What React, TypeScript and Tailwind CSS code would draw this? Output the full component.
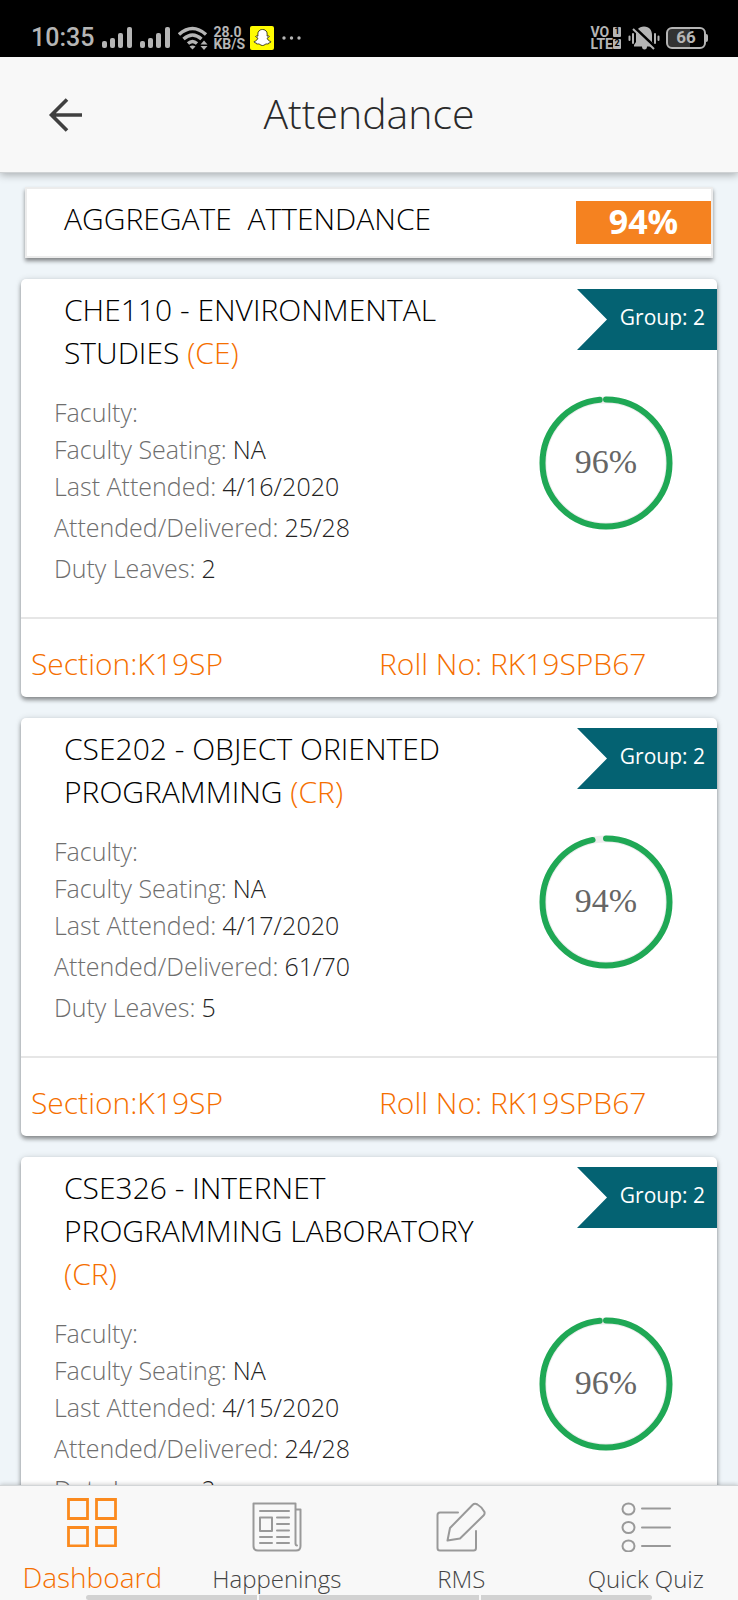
import type { ReactNode } from "react";
import { FaSnapchatGhost } from "react-icons/fa";

type Course = {
  code: string;
  name: string;
  kind: string;
  group: number;
  lastAttended: string;
  attended: string;
  dutyLeaves: number;
  percent: number;
  arc: number;
};

const courses: Course[] = [
  { code: "CHE110", name: "ENVIRONMENTAL STUDIES", kind: "CE", group: 2, lastAttended: "4/16/2020", attended: "25/28", dutyLeaves: 2, percent: 96, arc: 98.4 },
  { code: "CSE202", name: "OBJECT ORIENTED PROGRAMMING", kind: "CR", group: 2, lastAttended: "4/17/2020", attended: "61/70", dutyLeaves: 5, percent: 94, arc: 96.6 },
  { code: "CSE326", name: "INTERNET PROGRAMMING LABORATORY", kind: "CR", group: 2, lastAttended: "4/15/2020", attended: "24/28", dutyLeaves: 2, percent: 96, arc: 98.4 },
];

function SignalBars() {
  return (
    <svg viewBox="0 0 30 21" className="h-[21px] w-[30px]" fill="#b5b5b5" aria-hidden="true">
      <rect x="0" y="14" width="5" height="7" rx="2" />
      <rect x="8" y="11" width="5" height="10" rx="2" />
      <rect x="16" y="6" width="5" height="15" rx="2" />
      <rect x="25" y="0" width="5" height="21" rx="2" />
    </svg>
  );
}

function StatusBar() {
  return (
    <div className="flex h-[57px] shrink-0 items-center justify-between bg-black pt-[18px] pr-[30px] pl-[31px] font-[Roboto,sans-serif] text-[#b5b5b5]">
      <div className="flex items-center">
        <span className="text-[25px] leading-8 font-medium">10:35</span>
        <div className="ml-2 flex gap-2">
          <SignalBars />
          <SignalBars />
        </div>
        <svg viewBox="0 0 30 24" className="ml-2 h-6 w-[30px]" fill="none" stroke="#b5b5b5" strokeWidth="3.400" aria-hidden="true">
          <path d="M1 8.500Q14.500-3.500 28 8.500" />
          <path d="M5.500 13Q14.500 5 23.500 13" />
          <path d="M10 17.500Q14.500 13.500 19 17.500" />
          <path d="M11.500 20.500Q14.500 18.500 17.500 20.500L14.500 23.500Z" fill="#b5b5b5" stroke="none" />
          <path d="M22.500 18.500L26 14.500L29.500 18.500ZM22.500 20L26 24L29.500 20Z" fill="#b5b5b5" stroke="none" />
        </svg>
        <div className="ml-[5px] flex flex-col text-[14px] leading-3 font-bold">
          <span>28.0</span>
          <span>KB/S</span>
        </div>
        <span className="ml-[5px] flex size-6 items-center justify-center rounded-[2px] bg-[#fffc00]">
          <FaSnapchatGhost className="size-[17px] overflow-visible fill-white stroke-black" strokeWidth={22} aria-hidden="true" />
        </span>
        <svg viewBox="0 0 20 4" className="ml-2 h-1 w-5" fill="#b5b5b5" aria-hidden="true">
          <circle cx="2" cy="2" r="1.700" />
          <circle cx="9.500" cy="2" r="1.700" />
          <circle cx="17" cy="2" r="1.700" />
        </svg>
      </div>
      <div className="flex items-center">
        <div className="flex flex-col text-[14px] leading-3 font-bold">
          <span className="flex items-center justify-between gap-[2px]">
            VO
            <span className="flex h-[10px] w-2 items-center justify-center rounded-[1px] bg-[#b5b5b5] text-[9px] leading-none text-black">1</span>
          </span>
          <span className="flex items-center justify-between">
            LTE
            <span className="flex h-[10px] w-2 items-center justify-center rounded-[1px] bg-[#b5b5b5] text-[9px] leading-none text-black">2</span>
          </span>
        </div>
        <svg viewBox="0 0 32 24" className="ml-[7px] h-6 w-8" aria-hidden="true">
          <path d="M16 0.500C10.500 0.500 8 4.500 8 9V16L6 19V20.500H14Q14 23.500 16.500 23.500Q19 23.500 19 20.500H26V19L24 16V9C24 4.500 21.500 0.500 16 0.500Z" fill="#b5b5b5" />
          <path d="M6.500 1.500L28 22" stroke="#000" strokeWidth="3" />
          <path d="M5 3L26 23" stroke="#b5b5b5" strokeWidth="2" />
          <path d="M1.500 10.500V14M5 8V17M27 8V17M30.500 10.500V14" stroke="#b5b5b5" strokeWidth="2" strokeLinecap="round" />
        </svg>
        <div className="ml-[6px] flex h-[22px] w-10 items-center justify-center rounded-[6px] border-2 border-[#b5b5b5] bg-linear-to-r from-[#333] from-60% to-black to-60% text-[17px] leading-none font-bold">
          66
        </div>
        <span className="h-2 w-[2px] rounded-r-sm bg-[#b5b5b5]" />
      </div>
    </div>
  );
}

function Header() {
  return (
    <header className="z-10 grid h-[116px] shrink-0 grid-cols-[1fr_auto_1fr] items-center border-b border-[#cfd2d4] bg-[#f8f8f8] shadow-[0_2px_8px_rgba(0,0,0,0.3)]">
      <button type="button" aria-label="Back" className="ml-12 flex size-9 items-center justify-center">
        <svg viewBox="0 0 36 36" className="size-9" fill="none" stroke="#404040" strokeWidth="3.600" aria-hidden="true">
          <path d="M34 18H4M19 2.500L3.500 18L19 33.500" />
        </svg>
      </button>
      <h1 className="pb-1 text-[41px] leading-[52px] text-[#2a2a2a]">Attendance</h1>
    </header>
  );
}

function Aggregate() {
  return (
    <section className="mx-[4px] flex h-[71px] shrink-0 items-center justify-between border-2 border-[#ececec] bg-white pl-[37px] shadow-[0_3px_4px_rgba(0,0,0,0.45)]">
      <h2 className="pb-2 text-[30px] leading-9 whitespace-pre text-black">{"AGGREGATE  ATTENDANCE"}</h2>
      <span className="flex h-[43px] w-[135px] items-center justify-center bg-[#f58220] pb-1 text-[34px] leading-none font-bold text-white">94%</span>
    </section>
  );
}

function Ring({ percent, arc }: { percent: number; arc: number }) {
  return (
    <div className="mt-[2px] grid size-[134px] shrink-0 place-items-center">
      <svg viewBox="0 0 134 134" className="col-start-1 row-start-1 size-full -rotate-90" fill="none" aria-hidden="true">
        <circle cx="67" cy="67" r="63" stroke="#ededed" strokeWidth="7" />
        <circle cx="67" cy="67" r="63.500" stroke="#1fa855" strokeWidth="6" strokeLinecap="round" pathLength={100} strokeDasharray={`${arc} 100`} />
      </svg>
      <span className="col-start-1 row-start-1 pb-[2px] font-['Liberation_Serif',serif] text-[34px] leading-none text-[#666]">{percent}%</span>
    </div>
  );
}

function Fact({ label, children }: { label: string; children?: ReactNode }) {
  return (
    <div className="flex gap-[6px] leading-[37px]">
      <dt className="text-[#6e6e6e]">{label}:</dt>
      <dd className="text-[#222]">{children}</dd>
    </div>
  );
}

function CourseCard({ course }: { course: Course }) {
  return (
    <article className="rounded-[5px] bg-white pt-[9px] shadow-[0_3px_4px_rgba(0,0,0,0.4),0_0_6px_rgba(0,0,0,0.12)]">
      <div className="flex items-start justify-between">
        <h2 className="max-w-[480px] pl-[43px] text-[30px] leading-[43px] text-black">
          {course.code} - {course.name} <span className="text-[#f56f00]">({course.kind})</span>
        </h2>
        <span className="mt-px flex h-[61px] w-[140px] shrink-0 justify-end bg-[#046272] pt-3 pr-3 text-[21px] leading-8 font-normal text-white [clip-path:polygon(0_0,100%_0,100%_100%,0_100%,30px_50%)]">
          Group: {course.group}
        </span>
      </div>
      <div className="mt-5 flex justify-between pr-[44px] pb-[30px] pl-[33px]">
        <dl className="text-[25px]">
          <Fact label="Faculty" />
          <Fact label="Faculty Seating">NA</Fact>
          <Fact label="Last Attended">{course.lastAttended}</Fact>
          <div className="mt-1 flex flex-col gap-1">
            <Fact label="Attended/Delivered">{course.attended}</Fact>
            <Fact label="Duty Leaves">{course.dutyLeaves}</Fact>
          </div>
        </dl>
        <Ring percent={course.percent} arc={course.arc} />
      </div>
      <div className="grid grid-cols-2 border-t-2 border-[#e6e6e6] pt-[27px] pb-[15px] text-[30px] leading-9 text-[#f56f00]">
        <span className="pl-[10px]">Section:K19SP</span>
        <span className="pl-[10px]">Roll No: RK19SPB67</span>
      </div>
    </article>
  );
}

function NavItem({ label, active, children }: { label: string; active?: boolean; children: ReactNode }) {
  return (
    <a href="#" className="flex flex-col items-center gap-2" aria-current={active ? "page" : undefined}>
      <svg viewBox="0 0 50 50" className="size-[50px]" fill="none" stroke="currentColor" strokeWidth="2" strokeLinecap="round" strokeLinejoin="round" aria-hidden="true">
        {children}
      </svg>
      {label}
    </a>
  );
}

function BottomNav() {
  return (
    <nav className="z-10 shrink-0 border-t border-[#d2d5d7] bg-[#f8f8f8] shadow-[0_-1px_4px_rgba(0,0,0,0.18)]">
      <div className="grid h-[109px] grid-cols-4 pt-4">
        <div className="-mt-[5px] text-[28px] leading-[44px] text-[#f56f00]">
          <NavItem label="Dashboard" active>
            <path d="M1.500 2.500H20.500V21.500H1.500ZM29.500 2.500H48.500V21.500H29.500ZM1.500 30.500H20.500V49H1.500ZM29.500 30.500H48.500V49H29.500Z" strokeWidth="2.800" stroke="#fb8a1e" strokeLinejoin="miter" />
          </NavItem>
        </div>
        <div className="text-[24px] leading-[38px] text-[#444]">
          <NavItem label="Happenings">
            <g stroke="#999">
              <path d="M43.500 42V1.500H1.500V44Q1.500 48.500 6 48.500H44Q48.500 48.500 48.500 44V7.500H43.500M43.500 41Q43.500 43.500 45 43.500" />
              <path d="M8 9H37M8 15.500H20V29H8ZM25 15.500H37M25 22H37M25 28.500H37M8 35H20M25 35H37M8 41H20M25 41H37" />
            </g>
          </NavItem>
        </div>
        <div className="text-[24px] leading-[38px] text-[#444]">
          <NavItem label="RMS">
            <g stroke="#999">
              <path d="M22 10.500H4Q1.500 10.500 1.500 13V46Q1.500 48.500 4 48.500H37.500Q40 48.500 40 46V29" />
              <path d="M36.500 3Q38.500 1 41.500 2.500Q46 5 48.500 10Q49 12 47.500 13.500L24 36.500L11.500 38.500L14 26Z" />
            </g>
          </NavItem>
        </div>
        <div className="text-[24px] leading-[38px] text-[#444]">
          <NavItem label="Quick Quiz">
            <g stroke="#999">
              <ellipse cx="7.500" cy="7" rx="6" ry="5.500" />
              <ellipse cx="7.500" cy="25.500" rx="6" ry="5.500" />
              <ellipse cx="7.500" cy="44" rx="6" ry="5.500" />
              <path d="M21 6.500H49M21 25.500H49M21 44H49" />
            </g>
          </NavItem>
        </div>
      </div>
      <div className="mx-[86px] flex h-[5px] gap-[2px] overflow-hidden rounded-full">
        <span className="flex-[7] bg-[#d2d2d2]" />
        <span className="flex-[9] bg-[#d2d2d2]" />
        <span className="flex-[7] bg-[#d2d2d2]" />
      </div>
    </nav>
  );
}

export default function App() {
  return (
    <div className="flex h-screen flex-col bg-[#eff5f9] font-['Open_Sans','Noto_Sans',sans-serif] font-light">
      <StatusBar />
      <Header />
      <main className="flex min-h-0 flex-1 flex-col overflow-y-auto px-[21px] pt-[14px] [scrollbar-width:none]">
        <Aggregate />
        <div className="mt-[21px] flex flex-col gap-[21px]">
          {courses.map((course) => (
            <CourseCard key={course.code} course={course} />
          ))}
        </div>
      </main>
      <BottomNav />
    </div>
  );
}
